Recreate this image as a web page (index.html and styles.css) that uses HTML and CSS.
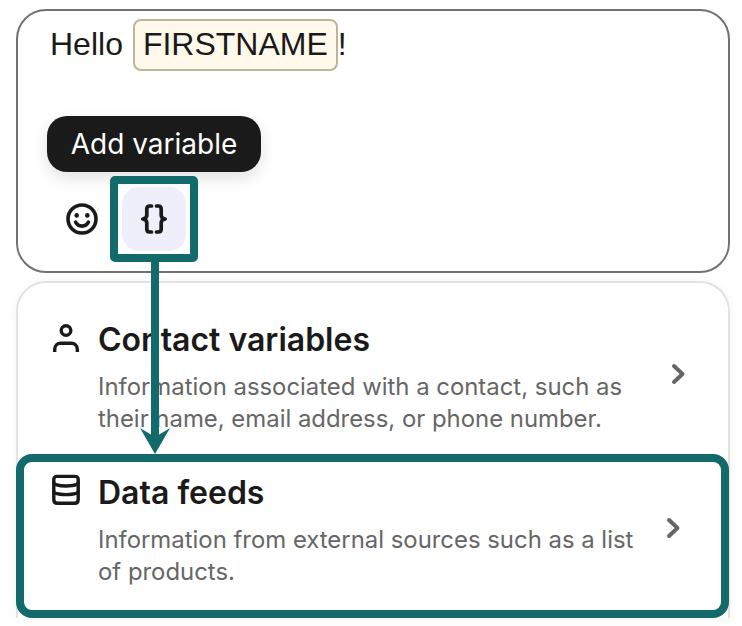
FILE: index.html
```html
<!DOCTYPE html>
<html lang="en">
<head>
<meta charset="utf-8">
<title>Add variable</title>
<link rel="stylesheet" href="styles.css">
</head>
<body>
<main class="page">
  <section class="editor">
    <p class="message"><span>Hello</span><span class="chip">FIRSTNAME</span><span class="bang">!</span></p>
    <div class="tooltip">Add variable</div>
    <div class="toolbar">
      <button class="tool emoji" aria-label="Emoji">
        <svg width="34" height="34" viewBox="0 0 34 34" fill="none" stroke="#1a1a1a" stroke-width="3.6" stroke-linecap="round">
          <circle cx="17" cy="17" r="14"/>
          <circle cx="11.7" cy="13.4" r="2.3" fill="#1a1a1a" stroke="none"/>
          <circle cx="22.3" cy="13.4" r="2.3" fill="#1a1a1a" stroke="none"/>
          <path d="M10.6 20.2c1.4 2.6 3.7 3.9 6.4 3.9s5-1.3 6.4-3.9"/>
        </svg>
      </button>
      <div class="focus-box">
        <button class="tool braces" aria-label="Add variable">
          <svg width="30" height="32" viewBox="0 0 30 32" fill="none" stroke="#1a1a1a" stroke-width="3.7" stroke-linecap="round" stroke-linejoin="round">
            <path d="M12.500 3h-1.700c-2 0-3 1-3 3v6.200c0 2-1 3.400-4 3.800 3 .4 4 1.800 4 3.800V26c0 2 1 3 3 3h1.700"/>
            <path d="M17.500 3h1.700c2 0 3 1 3 3v6.200c0 2 1 3.400 4 3.800-3 .4-4 1.800-4 3.800V26c0 2-1 3-3 3h-1.700"/>
          </svg>
        </button>
      </div>
    </div>
  </section>

  <section class="menu">
    <article class="row first">
      <svg class="row-icon" width="32" height="32" viewBox="0 0 32 32" fill="none" stroke="#1a1a1a" stroke-width="3.4">
        <circle cx="16" cy="7.500" r="4.800"/>
        <path d="M4.700 29v-2.800c0-3.600 2.600-6 6-6h10.600c3.400 0 6 2.400 6 6V29"/>
      </svg>
      <div class="row-text">
        <h2>Contact variables</h2>
        <p>Information associated with a contact, such as their name, email address, or phone number.</p>
      </div>
      <svg class="chevron" width="16" height="24" viewBox="0 0 16 24" fill="none" stroke="#666" stroke-width="4" stroke-linecap="round" stroke-linejoin="round"><path d="M4 4l8.500 8L4 20"/></svg>
    </article>
    <article class="row selected">
      <svg class="row-icon" width="32" height="32" viewBox="0 0 32 32" fill="none" stroke="#1a1a1a" stroke-width="3.4" stroke-linecap="round" stroke-linejoin="round">
        <path d="M6.800 2.400h18.400c1.700 0 3 1.400 3 3v3.200c0 1.600-3.900 3.400-12.200 3.400S3.800 10.200 3.800 8.600V5.400c0-1.600 1.300-3 3-3z"/>
        <path d="M3.800 8.600v16.800c0 2.200 1.300 3.800 3.600 3.800h17.200c2.300 0 3.600-1.600 3.600-3.800V8.600"/>
        <path d="M3.800 17.500c0 1.800 3.900 3.100 12.200 3.100s12.200-1.300 12.200-3.100"/>
      </svg>
      <div class="row-text">
        <h2>Data feeds</h2>
        <p>Information from external sources such as a list of products.</p>
      </div>
      <svg class="chevron" width="16" height="24" viewBox="0 0 16 24" fill="none" stroke="#666" stroke-width="4" stroke-linecap="round" stroke-linejoin="round"><path d="M4 4l8.500 8L4 20"/></svg>
    </article>
  </section>

  <svg class="arrow" width="40" height="200" viewBox="0 0 40 200" fill="#126b6a">
    <rect x="16" y="0" width="8" height="178"/>
    <path d="M20 192L5 166l15 9 15-9z"/>
  </svg>
</main>
</body>
</html>
```

FILE: styles.css
```css
* { box-sizing: border-box; }

html, body {
  margin: 0;
  background: #fff;
}

.page {
  position: relative;
  width: 742px;
  height: 626px;
  padding: 9px 12px 0 16px;
  overflow: hidden;
  font-family: "Inter", "Liberation Sans", sans-serif;
  color: #1a1a1a;
}

.editor {
  position: relative;
  height: 264px;
  border: 2px solid #717171;
  border-radius: 30px;
  padding: 8px 0 0 32px;
  background: #fff;
}

.message {
  display: flex;
  align-items: flex-start;
  margin: 0;
  font-family: "Liberation Sans", Arial, sans-serif;
  font-size: 32px;
  line-height: 50px;
}

.chip {
  height: 52px;
  margin-left: 10px;
  padding: 0 8px;
  border: 2px solid #bfb49a;
  border-radius: 8px;
  background: #fff9ec;
  line-height: 46px;
}

.tooltip {
  position: absolute;
  left: 29px;
  top: 105px;
  height: 56px;
  width: 214px;
  border-radius: 20px;
  background: #1a1a1a;
  color: #fff;
  font-size: 28px;
  line-height: 56px;
  text-align: center;
  box-shadow: 0 6px 16px rgba(0, 0, 0, 0.12);
}

.toolbar {
  position: absolute;
  left: 42px;
  top: 165px;
  display: flex;
  align-items: center;
  gap: 6px;
}

.tool {
  display: flex;
  align-items: center;
  justify-content: center;
  padding: 0;
  border: 0;
  background: none;
}

.emoji {
  width: 44px;
  height: 44px;
}

.focus-box {
  width: 88px;
  height: 86px;
  padding: 3px 4px;
  border: 8px solid #126b6a;
  border-radius: 5px;
}

.braces {
  width: 64px;
  height: 64px;
  border-radius: 17px;
  background: #efeefb;
}

.menu {
  margin-top: 8px;
  height: 337px;
  border: 2px solid #e3e3e3;
  border-bottom: 0;
  border-radius: 30px 30px 0 0;
  box-shadow: 0 2px 12px rgba(0, 0, 0, 0.05);
  background: #fff;
}

.row {
  display: flex;
  align-items: flex-start;
  background: #fff;
  border-radius: 30px 30px 0 0;
}

.first {
  height: 171px;
  padding: 37px 40px 0 32px;
}

.first .row-icon {
  margin-top: 3px;
}

.selected {
  height: 164px;
  margin: 0 -1px 0 -2px;
  padding: 11px 40px 0 26px;
  border: 8px solid #126b6a;
  border-radius: 16px;
}

.selected .row-icon {
  margin-top: 1px;
}

.row-icon {
  flex: none;
}

.row-text {
  width: 560px;
  margin-left: 16px;
}

.row h2 {
  margin: 0;
  font-size: 32px;
  font-weight: 600;
  line-height: 40px;
}

.row p {
  margin: 11px 0 0;
  color: #666;
  font-size: 23.9px;
  line-height: 32px;
}

.chevron {
  flex: none;
  margin: 42px 0 0 12px;
}

.selected .chevron {
  margin: 43px 0 0 18px;
}

.arrow {
  position: absolute;
  left: 135px;
  top: 262px;
}
```
